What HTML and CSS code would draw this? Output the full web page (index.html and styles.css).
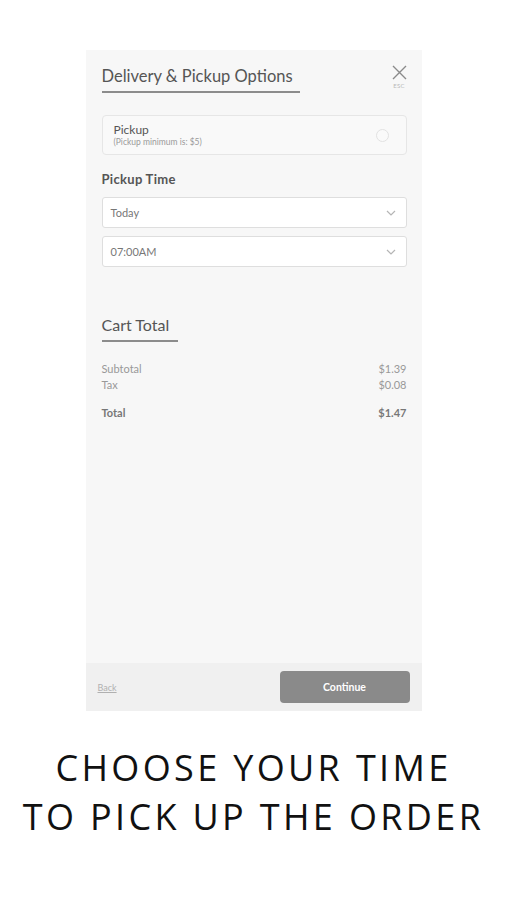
FILE: index.html
```html
<!DOCTYPE html>
<html>
<head>
<meta charset="utf-8">
<link rel="stylesheet" href="styles.css">
</head>
<body>
<div class="panel">
  <div class="content">
    <div class="head">
      <h1 class="title">Delivery &amp; Pickup Options</h1>
      <div class="close">
        <svg width="15" height="15" viewBox="0 0 15 15"><path d="M1 1L14 14M14 1L1 14" stroke="#8a8a8a" stroke-width="1.4" fill="none"/></svg>
        <span class="esc">ESC</span>
      </div>
    </div>
    <div class="option">
      <div class="option-text">
        <div class="option-name">Pickup</div>
        <div class="option-sub">(Pickup minimum is: $5)</div>
      </div>
      <span class="radio"></span>
    </div>
    <div class="label">Pickup Time</div>
    <div class="select">
      <span>Today</span>
      <svg width="10" height="6" viewBox="0 0 10 6"><path d="M1 1L5 5L9 1" stroke="#b5b5b5" stroke-width="1.2" fill="none"/></svg>
    </div>
    <div class="select">
      <span>07:00AM</span>
      <svg width="10" height="6" viewBox="0 0 10 6"><path d="M1 1L5 5L9 1" stroke="#b5b5b5" stroke-width="1.2" fill="none"/></svg>
    </div>
    <h2 class="subtitle">Cart Total</h2>
    <div class="rows">
      <div class="row"><span>Subtotal</span><span>$1.39</span></div>
      <div class="row"><span>Tax</span><span>$0.08</span></div>
      <div class="row total"><span>Total</span><span>$1.47</span></div>
    </div>
  </div>
  <div class="footer">
    <a class="back">Back</a>
    <button class="continue">Continue</button>
  </div>
</div>
<p class="caption">CHOOSE YOUR TIME<br>TO PICK UP THE ORDER</p>
</body>
</html>
```
FILE: styles.css
```css
* { box-sizing: border-box; }
body {
  margin: 0;
  background: #ffffff;
  font-family: Lato, "Open Sans", sans-serif;
}
.panel {
  width: 336px;
  height: 661px;
  margin: 50px auto 0;
  background: #f7f7f7;
  display: flex;
  flex-direction: column;
}
.content {
  flex: 1;
  padding: 15px 15px 0 16px;
}
.head {
  display: flex;
  justify-content: space-between;
  align-items: flex-start;
}
.title {
  margin: 0;
  font-size: 16.5px;
  font-weight: 400;
  color: #555;
  line-height: 22px;
  padding-bottom: 4px;
  width: 198px;
  border-bottom: 2px solid #8c8c8c;
}
.close {
  display: flex;
  flex-direction: column;
  align-items: center;
  margin-top: 0px;
}
.esc {
  font-size: 6px;
  color: #b8b8b8;
  line-height: 7px;
  margin-top: 2px;
  letter-spacing: 0.3px;
}
.option {
  margin-top: 22px;
  height: 40px;
  border: 1px solid #e6e6e6;
  border-radius: 4px;
  background: #f9f9f9;
  display: flex;
  align-items: center;
  justify-content: space-between;
  padding: 0 17px 0 11px;
}
.option-name {
  font-size: 12px;
  color: #555;
  line-height: 14px;
}
.option-sub {
  font-size: 8.5px;
  color: #999;
  line-height: 11px;
}
.radio {
  width: 13px;
  height: 13px;
  border: 1px solid #e2e2e2;
  border-radius: 50%;
  background: #fafafa;
}
.label {
  margin-top: 16px;
  font-size: 13px;
  font-weight: 700;
  color: #555;
  letter-spacing: 0.3px;
  line-height: 17px;
}
.select {
  margin-top: 9px;
  height: 31px;
  background: #fff;
  border: 1px solid #dedede;
  border-radius: 3px;
  display: flex;
  align-items: center;
  justify-content: space-between;
  padding: 0 10px 0 8px;
  font-size: 11px;
  color: #777;
}
.select + .select { margin-top: 8px; }
.subtitle {
  margin: 48px 0 0;
  width: 76px;
  font-size: 16px;
  font-weight: 400;
  color: #555;
  line-height: 20px;
  padding-bottom: 5px;
  border-bottom: 2px solid #8c8c8c;
}
.rows { margin-top: 19px; }
.row {
  display: flex;
  justify-content: space-between;
  font-size: 11px;
  color: #999;
  line-height: 16px;
}
.row.total {
  margin-top: 12px;
  font-weight: 700;
  color: #777;
}
.footer {
  height: 48px;
  background: #f0f0f0;
  display: flex;
  align-items: center;
  justify-content: space-between;
  padding: 0 12px 0 12px;
}
.back {
  font-size: 9px;
  color: #b0b0b0;
  text-decoration: underline;
}
.continue {
  width: 130px;
  height: 32px;
  border: none;
  border-radius: 4px;
  background: #8a8a8a;
  color: #fff;
  font-family: Lato, sans-serif;
  font-weight: 700;
  font-size: 10.5px;
}
.caption {
  margin: 32px 0 0;
  text-align: center;
  font-family: "Open Sans", sans-serif;
  font-size: 36px;
  line-height: 49px;
  letter-spacing: 3.35px;
  color: #111;
}
```
